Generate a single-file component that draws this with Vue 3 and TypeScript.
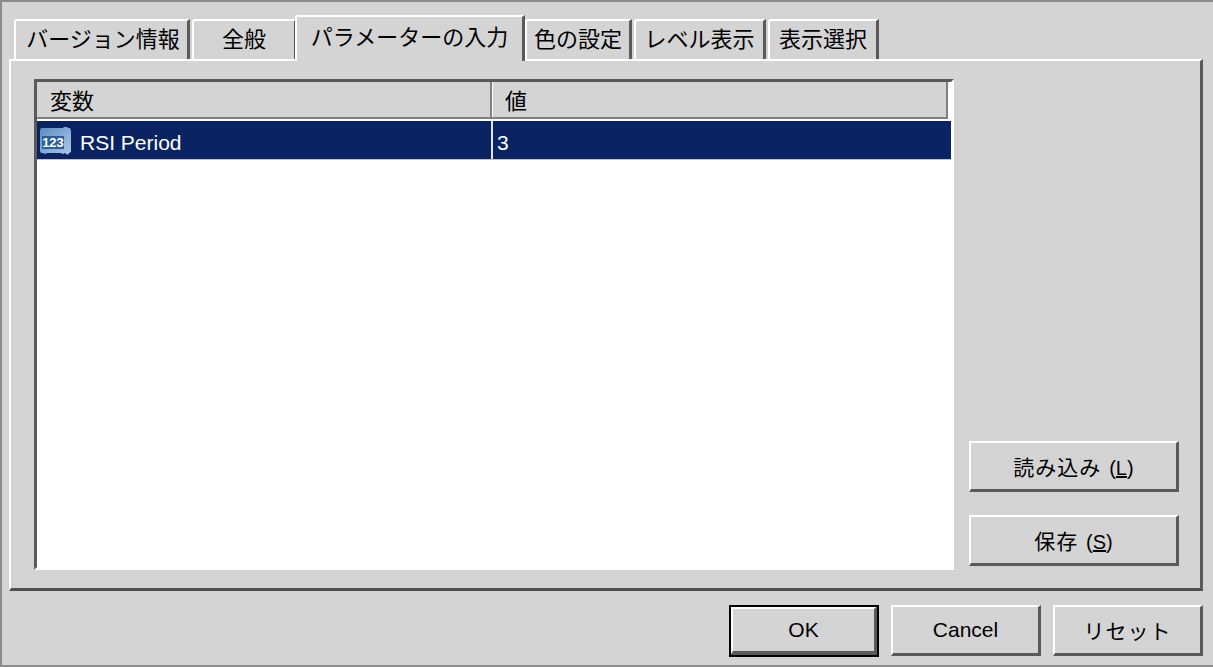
<template>
  <div class="window">
    <div class="tabs">
      <div
        v-for="tab in tabs"
        :key="tab.label"
        class="tab"
        :class="{ active: tab.active }"
        :style="{ width: tab.width + 'px' }"
      >
        {{ tab.label }}
      </div>
    </div>

    <div class="panel">
      <div class="table">
        <div class="table-head">
          <div class="cell name-col">変数</div>
          <div class="cell value-col">値</div>
        </div>
        <div class="table-row">
          <div class="cell name-col">
            <svg class="num-icon" width="33" height="31" viewBox="0 0 33 31">
              <defs>
                <linearGradient id="numFill" x1="0" y1="0" x2="1" y2="1">
                  <stop offset="0" stop-color="#5c8cc4" />
                  <stop offset="1" stop-color="#adc8e8" />
                </linearGradient>
              </defs>
              <path
                d="M2 3h22l1-1h3l1 1h2l1 3v21l-2 1-1 2-3-2-2 1-2-1H8l-2 1-2-1H2l-1-2V5z"
                fill="url(#numFill)"
              />
              <rect x="3" y="11" width="22" height="13" fill="#2f5d9a" />
              <text x="14" y="22" text-anchor="middle" class="num-text">123</text>
            </svg>
            <span class="row-label">RSI Period</span>
          </div>
          <div class="cell value-col"><span class="row-label">3</span></div>
        </div>
      </div>

      <div class="side">
        <button class="btn side-btn"><span class="cjk">読み込み</span> <span class="hotkey">(<u>L</u>)</span></button>
        <button class="btn side-btn"><span class="cjk">保存</span> <span class="hotkey">(<u>S</u>)</span></button>
      </div>
    </div>

    <div class="footer">
      <button class="btn footer-btn default">OK</button>
      <button class="btn footer-btn">Cancel</button>
      <button class="btn footer-btn"><span class="cjk">リセット</span></button>
    </div>
  </div>
</template>

<script setup lang="ts">
interface Tab {
  label: string
  width: number
  active?: boolean
}

const tabs: Tab[] = [
  { label: 'バージョン情報', width: 176 },
  { label: '全般', width: 105 },
  { label: 'パラメーターの入力', width: 230, active: true },
  { label: '色の設定', width: 107 },
  { label: 'レベル表示', width: 132 },
  { label: '表示選択', width: 111 },
]
</script>

<style scoped>
.window {
  width: 1213px;
  height: 667px;
  box-sizing: border-box;
  display: flex;
  flex-direction: column;
  padding: 13px 10px 0 7px;
  background: #d4d4d4;
  border-top: 2px solid #8c8c8c;
  border-left: 2px solid #8c8c8c;
  border-bottom: 2px solid #8c8c8c;
  color: #000;
  font-family: "Liberation Sans", "Noto Sans CJK JP", sans-serif;
  font-size: 21px;
  overflow: hidden;
}

.tabs {
  display: flex;
  align-items: flex-end;
  gap: 2px;
  height: 44px;
  padding-left: 5px;
  position: relative;
  z-index: 1;
}

.tab {
  box-sizing: border-box;
  height: 40px;
  flex: none;
  display: flex;
  align-items: center;
  justify-content: center;
  padding-bottom: 6px;
  border-top: 2px solid #fff;
  border-left: 2px solid #fff;
  border-right: 3px solid #5a5a5a;
  border-top-left-radius: 3px;
  background: #d4d4d4;
  font-size: 22px;
  white-space: nowrap;
}

.tab:first-child {
  padding-left: 3px;
}

.tab.active {
  height: 46px;
  margin: 0 -2px -2px -4px;
  padding-bottom: 9px;
  position: relative;
}

.panel {
  box-sizing: border-box;
  height: 532px;
  flex: none;
  display: flex;
  gap: 15px;
  padding: 18px 21px 17px 23px;
  border-top: 2px solid #fff;
  border-left: 2px solid #fff;
  border-right: 3px solid #5a5a5a;
  border-bottom: 3px solid #505050;
}

.table {
  box-sizing: border-box;
  width: 920px;
  height: 491px;
  flex: none;
  background: #fff;
  border-top: 3px solid #5a5a5a;
  border-left: 3px solid #5a5a5a;
  border-right: 3px solid #fff;
  border-bottom: 3px solid #fff;
}

.table-head {
  display: flex;
  height: 37px;
  box-sizing: border-box;
  background: #d4d4d4;
  margin-right: 3px;
  border-bottom: 2px solid #808080;
  border-right: 2px solid #808080;
}

.table-row {
  display: flex;
  height: 39px;
  box-sizing: border-box;
  margin-top: 2px;
  background: #0a2463;
  border-bottom: 1px solid #b9c3da;
  color: #fff;
}

.cell {
  box-sizing: border-box;
  display: flex;
  align-items: center;
}

.name-col {
  width: 455px;
  flex: none;
}

.value-col {
  flex: 1;
}

.table-head .cell {
  padding-bottom: 2px;
  font-size: 22px;
}

.table-head .name-col {
  padding-left: 13px;
  border-right: 2px solid #808080;
}

.table-head .value-col {
  padding-left: 12px;
  border-left: 1px solid #fff;
}

.table-row .name-col {
  width: 454px;
  padding-left: 2px;
  gap: 8px;
}

.table-row .value-col {
  padding-left: 4px;
  border-left: 2px solid #dfe4ee;
}

.row-label {
  margin-top: 6px;
}

.num-icon {
  flex: none;
}

.num-text {
  fill: #fff;
  font-family: "Liberation Sans", sans-serif;
  font-size: 13px;
  font-weight: 700;
}

.side {
  width: 210px;
  flex: none;
  display: flex;
  flex-direction: column;
  justify-content: flex-end;
  gap: 23px;
  padding-bottom: 5px;
}

.btn {
  box-sizing: border-box;
  margin: 0;
  padding: 0;
  background: #d4d4d4;
  color: #000;
  font: inherit;
  border-top: 2px solid #fff;
  border-left: 2px solid #fff;
  border-right: 3px solid #5a5a5a;
  border-bottom: 3px solid #5a5a5a;
  border-radius: 0;
  white-space: pre;
}

.side-btn {
  height: 51px;
  width: 210px;
}

.cjk {
  letter-spacing: 1px;
}

.hotkey {
  font-size: 20px;
  margin-left: 2px;
}

.footer {
  display: flex;
  justify-content: flex-end;
  align-items: flex-start;
  gap: 12px;
  padding-top: 14px;
}

.footer-btn {
  width: 150px;
  height: 51px;
}

.footer-btn.default {
  height: 52px;
  outline: 2px solid #000;
  outline-offset: -2px;
  border-top-width: 4px;
  border-left-width: 4px;
  border-right-width: 5px;
  border-bottom-width: 6px;
}
</style>

<style>
html,
body {
  margin: 0;
  background: #d4d4d4;
}
</style>
